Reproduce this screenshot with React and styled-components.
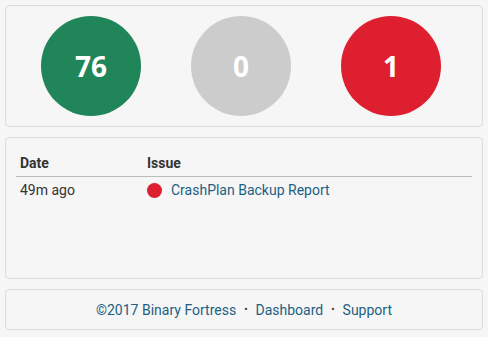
import React from "react";
import styled, { createGlobalStyle } from "styled-components";

const Global = createGlobalStyle`
  html, body { margin: 0; padding: 0; background: #f6f6f6; }
  body { padding: 5px; font-family: Roboto, "Liberation Sans", sans-serif; color: #333; }
  * { box-sizing: border-box; }
`;

const Page = styled.div`
  display: flex;
  flex-direction: column;
  gap: 10px;
  width: 478px;
`;

const Panel = styled.section`
  background: #f6f6f6;
  border: 1px solid #dcdcdc;
  border-radius: 4px;
  padding: 10px;
  min-height: ${(p) => p.$minHeight || "auto"};
`;

const StatsRow = styled.div`
  display: grid;
  grid-template-columns: repeat(3, 150px);
`;

const Circle = styled.div`
  width: 100px;
  height: 100px;
  border-radius: 50%;
  background: ${(p) => p.$color};
  justify-self: center;
  display: flex;
  align-items: center;
  justify-content: center;
  color: #fff;
  font-family: "Open Sans", sans-serif;
  font-weight: 700;
  font-size: 28px;
`;

const Table = styled.table`
  width: 100%;
  border-collapse: collapse;
  font-size: 14px;
`;

const Th = styled.th`
  text-align: left;
  font-weight: 700;
  color: #333;
  padding: 7px 4px 5px;
  border-bottom: 1px solid #bcbcbc;
  width: ${(p) => p.$width || "auto"};
`;

const Td = styled.td`
  padding: 5px 4px;
  color: #333;
  vertical-align: middle;
`;

const IssueCell = styled.div`
  display: flex;
  align-items: center;
  gap: 9px;
`;

const Dot = styled.span`
  width: 15px;
  height: 15px;
  border-radius: 50%;
  background: ${(p) => p.$color};
  flex: none;
`;

const Link = styled.a`
  color: #1c5f82;
  text-decoration: none;
`;

const Footer = styled.footer`
  background: #f6f6f6;
  border: 1px solid #dcdcdc;
  border-radius: 4px;
  height: 41px;
  display: flex;
  align-items: center;
  justify-content: center;
  gap: 8px;
  font-size: 14px;
  color: #1c5f82;
`;

const Sep = styled.span`
  color: #333;
  font-size: 10px;
`;

export default function App() {
  return (
    <>
      <Global />
      <Page>
        <Panel>
          <StatsRow>
            <Circle $color="#21855a">76</Circle>
            <Circle $color="#cccccc">0</Circle>
            <Circle $color="#de1f2f">1</Circle>
          </StatsRow>
        </Panel>
        <Panel $minHeight="142px">
          <Table>
            <thead>
              <tr>
                <Th $width="127px">Date</Th>
                <Th>Issue</Th>
              </tr>
            </thead>
            <tbody>
              <tr>
                <Td>49m ago</Td>
                <Td>
                  <IssueCell>
                    <Dot $color="#de1f2f" />
                    <Link href="#">CrashPlan Backup Report</Link>
                  </IssueCell>
                </Td>
              </tr>
            </tbody>
          </Table>
        </Panel>
        <Footer>
          <span>©2017 Binary Fortress</span>
          <Sep>•</Sep>
          <span>Dashboard</span>
          <Sep>•</Sep>
          <span>Support</span>
        </Footer>
      </Page>
    </>
  );
}
